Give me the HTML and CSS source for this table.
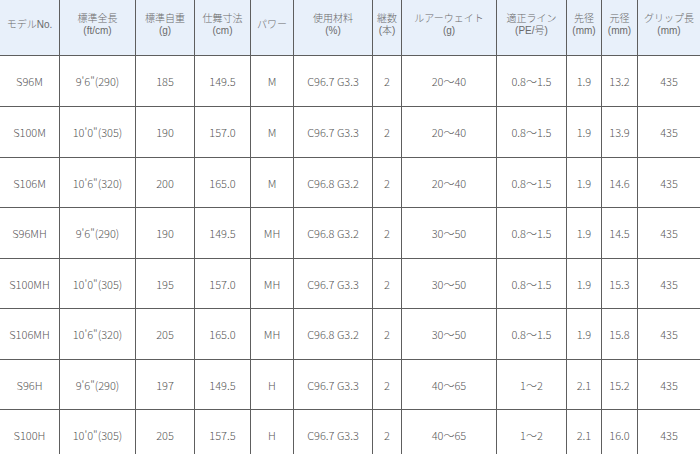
FILE: index.html
```html
<!DOCTYPE html>
<html lang="ja">
<head>
<meta charset="utf-8">
<title>スペック表</title>
<link rel="stylesheet" href="styles.css">
</head>
<body>
<div class="spec">
  <div class="h">モデルNo.</div>
  <div class="h"><span>標準全長</span><span>(ft/cm)</span></div>
  <div class="h"><span>標準自重</span><span>(g)</span></div>
  <div class="h"><span>仕舞寸法</span><span>(cm)</span></div>
  <div class="h">パワー</div>
  <div class="h"><span>使用材料</span><span>(%)</span></div>
  <div class="h"><span>継数</span><span>(本)</span></div>
  <div class="h"><span>ルアーウェイト</span><span>(g)</span></div>
  <div class="h"><span>適正ライン</span><span>(PE/号)</span></div>
  <div class="h"><span>先径</span><span>(mm)</span></div>
  <div class="h"><span>元径</span><span>(mm)</span></div>
  <div class="h"><span>グリップ長</span><span>(mm)</span></div>

  <div class="c">S96M</div><div class="c">9'6"(290)</div><div class="c">185</div><div class="c">149.5</div><div class="c">M</div><div class="c">C96.7 G3.3</div><div class="c">2</div><div class="c">20～40</div><div class="c">0.8～1.5</div><div class="c">1.9</div><div class="c">13.2</div><div class="c">435</div>

  <div class="c">S100M</div><div class="c">10'0"(305)</div><div class="c">190</div><div class="c">157.0</div><div class="c">M</div><div class="c">C96.7 G3.3</div><div class="c">2</div><div class="c">20～40</div><div class="c">0.8～1.5</div><div class="c">1.9</div><div class="c">13.9</div><div class="c">435</div>

  <div class="c">S106M</div><div class="c">10'6"(320)</div><div class="c">200</div><div class="c">165.0</div><div class="c">M</div><div class="c">C96.8 G3.2</div><div class="c">2</div><div class="c">20～40</div><div class="c">0.8～1.5</div><div class="c">1.9</div><div class="c">14.6</div><div class="c">435</div>

  <div class="c">S96MH</div><div class="c">9'6"(290)</div><div class="c">190</div><div class="c">149.5</div><div class="c">MH</div><div class="c">C96.8 G3.2</div><div class="c">2</div><div class="c">30～50</div><div class="c">0.8～1.5</div><div class="c">1.9</div><div class="c">14.5</div><div class="c">435</div>

  <div class="c">S100MH</div><div class="c">10'0"(305)</div><div class="c">195</div><div class="c">157.0</div><div class="c">MH</div><div class="c">C96.7 G3.3</div><div class="c">2</div><div class="c">30～50</div><div class="c">0.8～1.5</div><div class="c">1.9</div><div class="c">15.3</div><div class="c">435</div>

  <div class="c">S106MH</div><div class="c">10'6"(320)</div><div class="c">205</div><div class="c">165.0</div><div class="c">MH</div><div class="c">C96.8 G3.2</div><div class="c">2</div><div class="c">30～50</div><div class="c">0.8～1.5</div><div class="c">1.9</div><div class="c">15.8</div><div class="c">435</div>

  <div class="c">S96H</div><div class="c">9'6"(290)</div><div class="c">197</div><div class="c">149.5</div><div class="c">H</div><div class="c">C96.7 G3.3</div><div class="c">2</div><div class="c">40～65</div><div class="c">1～2</div><div class="c">2.1</div><div class="c">15.2</div><div class="c">435</div>

  <div class="c">S100H</div><div class="c">10'0"(305)</div><div class="c">205</div><div class="c">157.5</div><div class="c">H</div><div class="c">C96.7 G3.3</div><div class="c">2</div><div class="c">40～65</div><div class="c">1～2</div><div class="c">2.1</div><div class="c">16.0</div><div class="c">435</div>
</div>
</body>
</html>
```
FILE: styles.css
```css
html, body {
  margin: 0;
  padding: 0;
  overflow: hidden;
  background: #ffffff;
}

body {
  width: 700px;
  height: 454px;
  font-family: "Noto Sans CJK JP", "Liberation Sans", sans-serif;
  font-weight: 300;
  color: #575757;
}

.spec {
  display: grid;
  grid-template-columns: 59px 75px 58px 55px 42px 78px 28px 94px 69px 34px 35px 62px;
  grid-template-rows: 55px 50px 50px 49px 50px 49px 50px 49px 50px;
  gap: 1px;
  background: #5e5e5e;
  width: 700px;
}

.h,
.c {
  display: flex;
  align-items: center;
  justify-content: center;
  text-align: center;
  white-space: nowrap;
}

.h {
  flex-direction: column;
  background: #e8f0fa;
  font-family: "Liberation Sans", "Noto Sans CJK JP", sans-serif;
  font-size: 10px;
  line-height: 12px;
  color: #6a6a6a;
  padding-bottom: 5px;
  box-sizing: border-box;
}

.h span {
  display: block;
  height: 12px;
}

.c {
  background: #ffffff;
  font-size: 11px;
  line-height: 14px;
}
```
